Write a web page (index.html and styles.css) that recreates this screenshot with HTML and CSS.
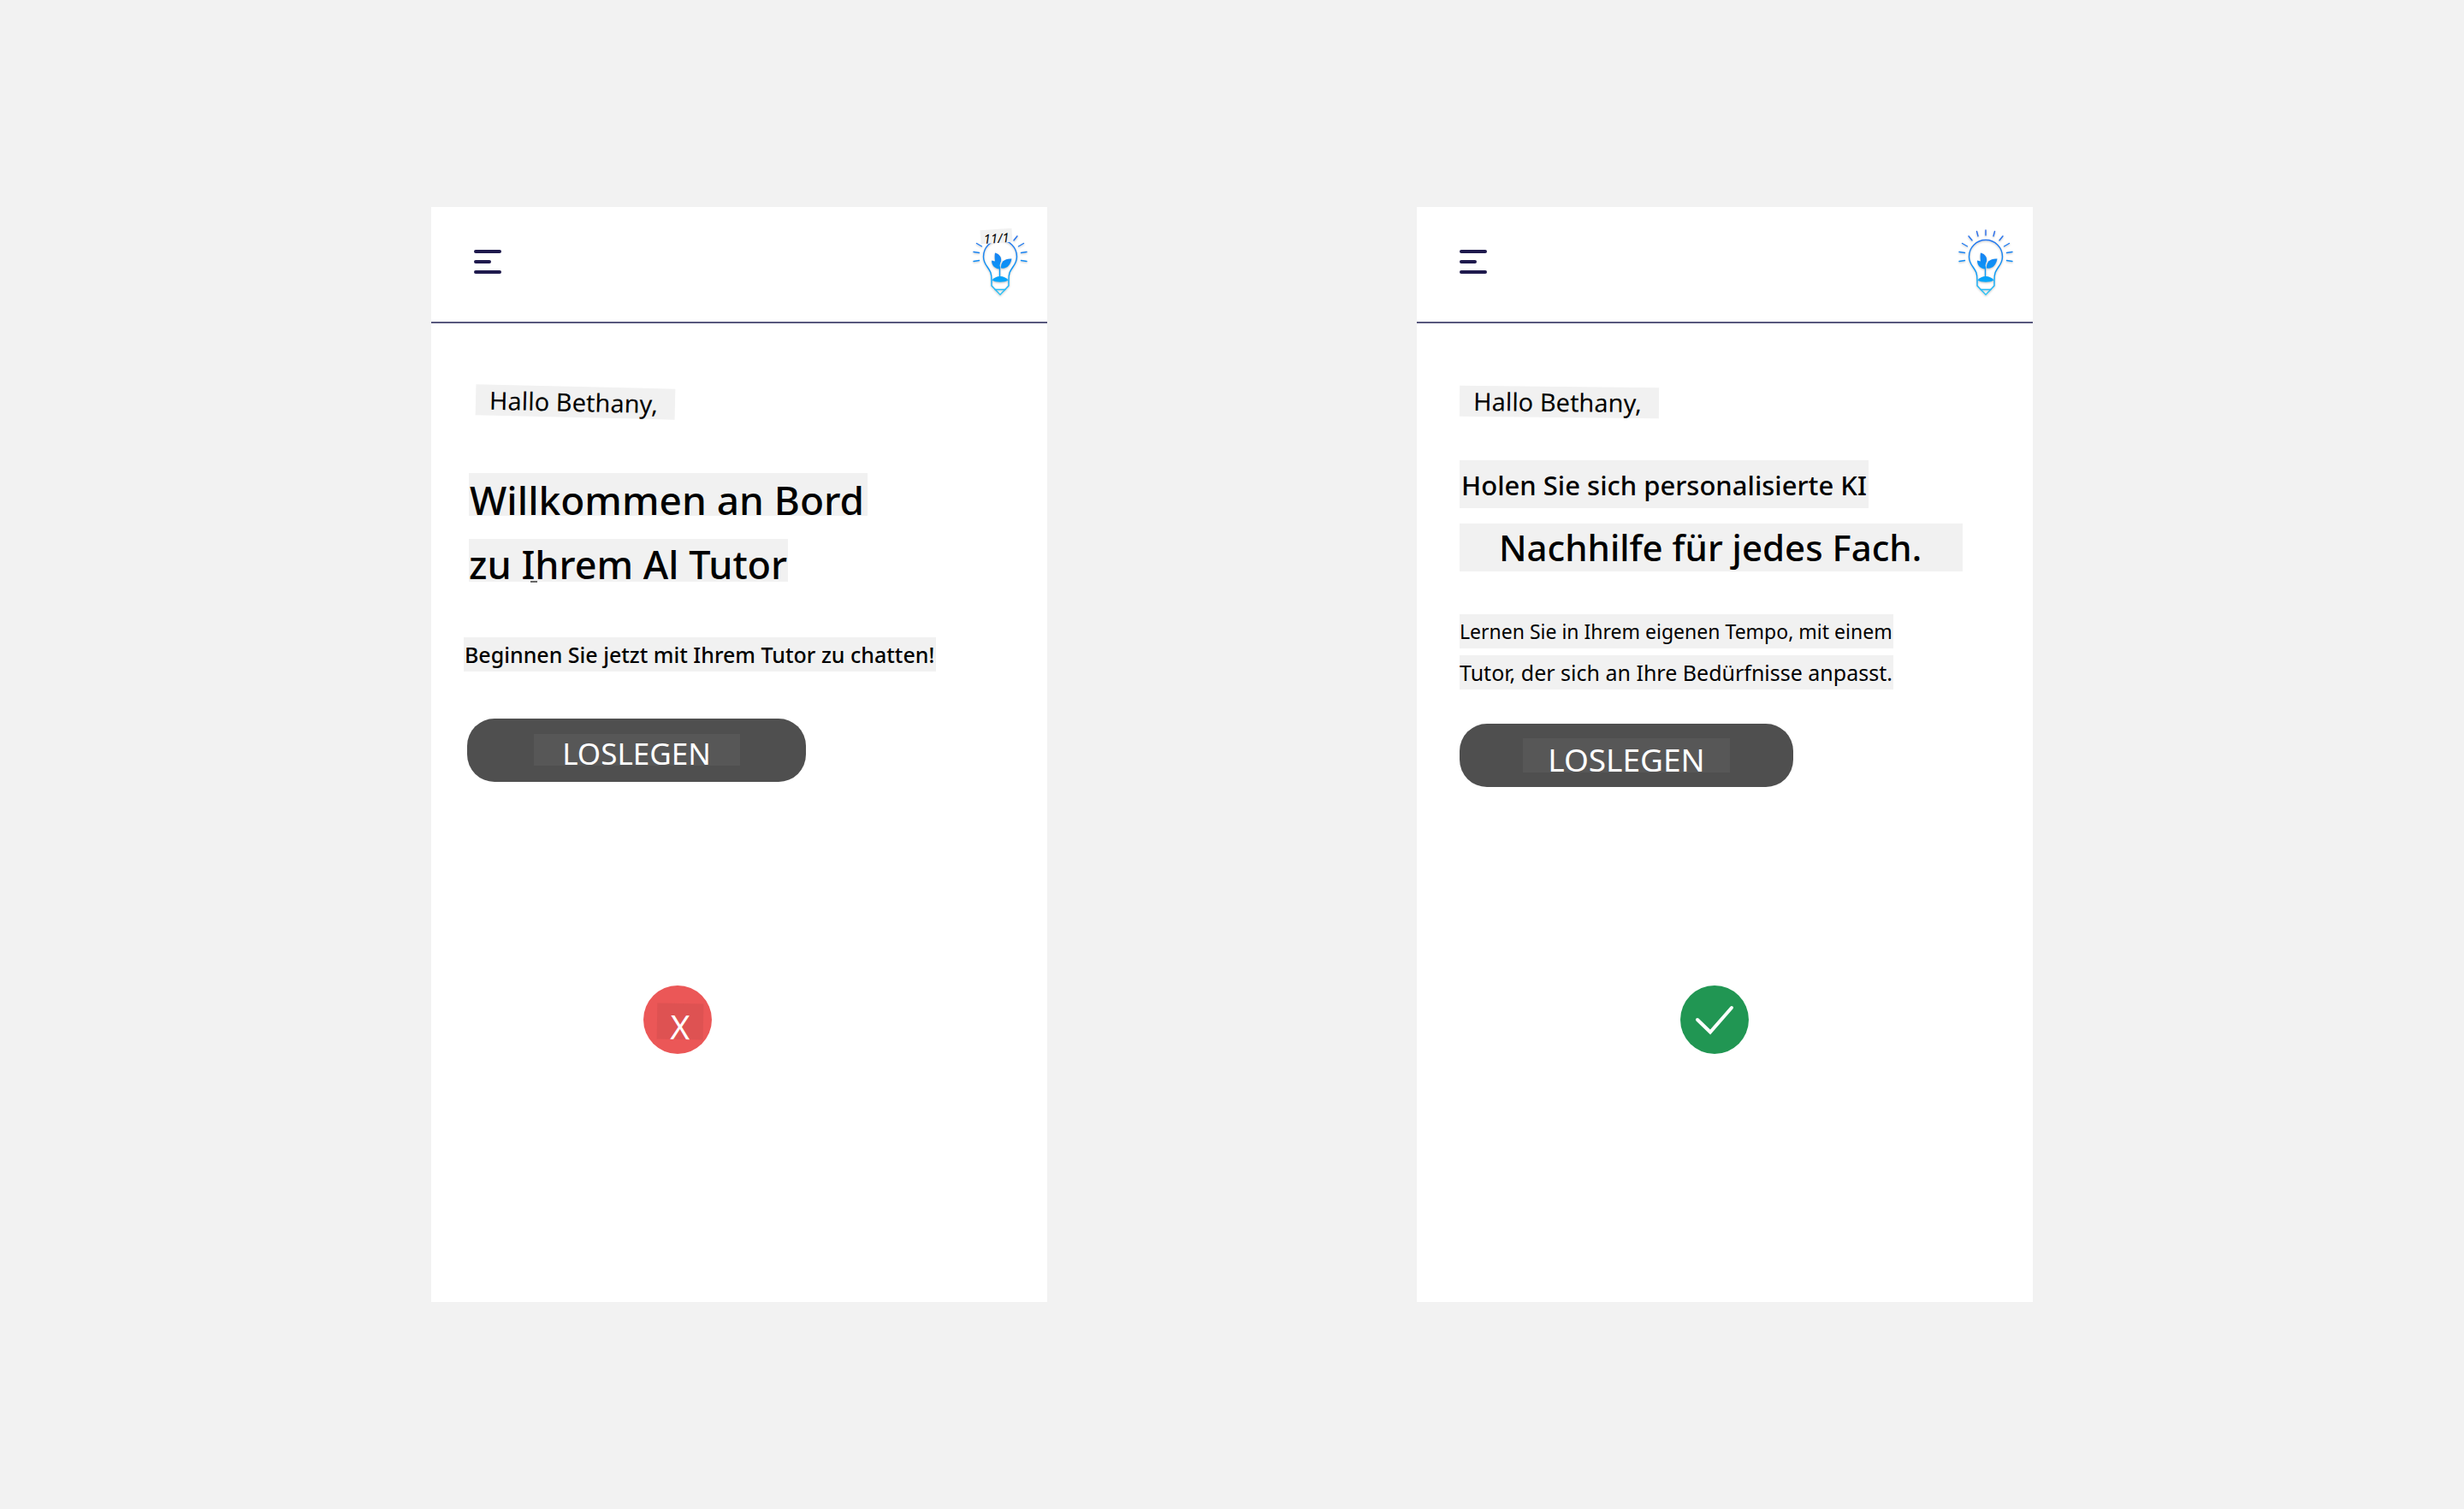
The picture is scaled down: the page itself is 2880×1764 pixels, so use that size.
FILE: index.html
```html
<!DOCTYPE html>
<html lang="de">
<head>
<meta charset="utf-8">
<meta name="viewport" content="width=device-width, initial-scale=1">
<title>KI Tutor</title>
<link rel="stylesheet" href="styles.css">
</head>
<body>
<svg class="defs" aria-hidden="true">
  <defs>
    <linearGradient id="sky" gradientUnits="userSpaceOnUse" x1="0" y1="0" x2="0" y2="78">
      <stop offset="0" stop-color="#2f6bec"/>
      <stop offset="0.5" stop-color="#0f8df5"/>
      <stop offset="0.75" stop-color="#05a4fa"/>
      <stop offset="1" stop-color="#35c9f5"/>
    </linearGradient>
    <symbol id="bulb" viewBox="0 0 64 80">
      <g fill="none" stroke="url(#sky)" stroke-width="1.4" stroke-linecap="round" stroke-linejoin="round">
        <path d="M31.99 1L32 7M21.500 2.500L23 8M42.500 2.500L41 8M12 8L16 13M52 8L48 13M4.500 16.500L10.500 20M59.500 16.500L53.500 20M1 26.500L7.500 27.500M63 26.500L56.500 27.500M1 37.500L7.500 36.500M63 37.500L56.500 36.500"/>
        <path d="M22 60C22 51 20.500 49 17 44C14 40 12.500 36 12.500 32A19.500 19.500 0 0 1 51.500 32C51.500 36 50 40 47 44C43.500 49 42 51 42 60V66L32 76.500L22 66Z"/>
        <path d="M31.500 44V56M26 70.500H38"/>
      </g>
      <g fill="url(#sky)">
        <path d="M26 27.500C31.500 29 34 33 33 37.500C31.500 40 31.500 43 31.500 46.500C25.500 46 22 42 22 36.500L26 37.500C25.500 34 25.500 30 26 27.500Z"/>
        <path d="M45.500 34.500C37 34 32.500 38 33 45.500C40 46.500 44 42 45.500 34.500Z"/>
        <path d="M22.500 59.500C27 53.500 37 53.500 41.500 59.500C37 62.500 27 62.500 22.500 59.500Z"/>
      </g>
    </symbol>
  </defs>
</svg>
<main class="board">
  <section class="screen">
    <header class="topbar">
      <button class="menu" type="button" aria-label="Menü"><span class="bar"></span><span class="bar bar-short"></span><span class="bar"></span></button>
      <div class="logo">
        <svg class="bulb" aria-hidden="true"><use href="#bulb"/></svg>
        <span class="tag">11/1</span>
      </div>
    </header>
    <div class="content welcome">
      <p class="strip greeting greeting-tilted">Hallo Bethany,</p>
      <h1 class="title">
        <span class="strip title-line">Willkommen an Bord</span>
        <span class="strip title-line title-line-marked">zu Ihrem Al Tutor</span>
      </h1>
      <p class="strip note">Beginnen Sie jetzt mit Ihrem Tutor zu chatten!</p>
      <button class="cta" type="button"><span class="cta-label">LOSLEGEN</span></button>
      <div class="badge badge-bad"><span class="cross">X</span></div>
    </div>
  </section>
  <section class="screen">
    <header class="topbar">
      <button class="menu" type="button" aria-label="Menü"><span class="bar"></span><span class="bar bar-short"></span><span class="bar"></span></button>
      <div class="logo">
        <svg class="bulb" aria-hidden="true"><use href="#bulb"/></svg>
      </div>
    </header>
    <div class="content offer">
      <p class="strip greeting">Hallo Bethany,</p>
      <h1 class="title">
        <span class="strip lead-line">Holen Sie sich personalisierte KI</span>
        <span class="strip main-line">Nachhilfe für jedes Fach.</span>
      </h1>
      <p class="details">
        <span class="strip detail-line">Lernen Sie in Ihrem eigenen Tempo, mit einem</span>
        <span class="strip detail-line detail-line-wide">Tutor, der sich an Ihre Bedürfnisse anpasst.</span>
      </p>
      <button class="cta" type="button"><span class="cta-label">LOSLEGEN</span></button>
      <div class="badge badge-good">
        <svg class="check" viewBox="0 0 80 80" aria-hidden="true"><path d="M20 40L35 54.500L60 26"/></svg>
      </div>
    </div>
  </section>
</main>
</body>
</html>
```
FILE: styles.css
```css
* { box-sizing: border-box; }

body {
  margin: 0;
  background: #f2f2f2;
  color: #000;
  font-family: "Noto Sans", sans-serif;
}

.defs { position: absolute; width: 0; height: 0; }

.board {
  display: grid;
  grid-template-columns: repeat(2, minmax(0, 720px));
  justify-content: center;
  align-content: center;
  column-gap: 15%;
  min-height: 100vh;
}

.screen { background: #fff; }

.topbar {
  display: flex;
  justify-content: space-between;
  align-items: flex-start;
  padding: 26px 23px 28px 50px;
  border-bottom: 2px solid #58587d;
}

.menu {
  display: flex;
  flex-direction: column;
  gap: 8px;
  margin-top: 24px;
  padding: 0;
  border: 0;
  background: none;
}

.bar { width: 32px; height: 4px; border-radius: 2px; background: #1f1a4d; }
.bar-short { width: 20px; }

.logo { position: relative; height: 80px; }
.bulb {
  display: block;
  width: 64px;
  height: 80px;
  filter: drop-shadow(0 1px 1px rgba(0, 0, 0, 0.25));
}

.tag {
  position: absolute;
  top: 0;
  left: 9px;
  width: 37px;
  height: 16px;
  background: #f1f1f1;
  font-size: 15px;
  font-style: italic;
  line-height: 20px;
  text-align: center;
  transform: rotate(-4deg);
}

.content {
  display: flex;
  flex-direction: column;
  align-items: flex-start;
  padding: 73px 24px 290px 42px;
}

.offer { padding-left: 50px; }

.strip {
  display: block;
  width: fit-content;
  background: #f1f1f1;
  white-space: nowrap;
}

.greeting {
  margin: 1px 0 0;
  padding: 0 20px 0 16px;
  font-size: 29px;
  line-height: 36px;
  transform: rotate(0.6deg);
}
.greeting-tilted { margin-left: 10px; transform: rotate(1.3deg); }

.title { display: grid; margin: 0; font-weight: 500; }

.welcome .title { gap: 27px; margin: 65px 0 0 2px; }
.title-line { height: 50px; padding: 0 4px 0 1px; font-size: 46px; line-height: 62px; }
.title-line-marked { position: relative; padding: 0 1px 0 0; font-size: 45px; line-height: 60px; }
.title-line-marked::after {
  content: "";
  position: absolute;
  top: 49px;
  left: 72px;
  width: 8px;
  height: 2px;
  background: #666;
}

.offer .title { gap: 18px; margin-top: 50px; }
.lead-line { height: 56px; padding: 0 2px; font-size: 31px; line-height: 58px; }
.main-line { padding: 0 48px 0 46px; font-size: 42px; line-height: 56px; }

.note {
  margin: 65px 0 0 -4px;
  padding: 0 2px 0 1px;
  font-size: 25px;
  font-weight: 500;
  line-height: 40px;
}

.details { display: grid; gap: 8px; margin: 50px 0 0; }
.detail-line { padding: 0 1px 0 0; font-size: 23px; line-height: 40px; }
.detail-line-wide { font-size: 25px; }

.cta {
  display: flex;
  justify-content: center;
  height: 74px;
  border: 0;
  border-radius: 32px;
  background: #4f4f4f;
  color: #fff;
  font: 400 37px "Noto Sans", sans-serif;
}
.cta-label { background: #575757; }

.welcome .cta { width: 396px; margin-top: 55px; padding: 18px 0; }
.welcome .cta-label { width: 241px; height: 37px; font-size: 35px; line-height: 46px; }
.offer .cta { width: 390px; margin-top: 40px; padding: 17px 0; }
.offer .cta-label { width: 242px; height: 40px; line-height: 50px; }

.badge {
  display: grid;
  place-items: center;
  width: 80px;
  height: 80px;
  border-radius: 50%;
}
.badge-bad { margin: 238px 0 0 206px; padding: 3px 0 0 5px; background: #eb5757; }
.badge-good { margin: 232px 0 0 258px; background: #219653; }

.cross {
  width: 54px;
  height: 42px;
  background: #de5252;
  color: #fff;
  font-size: 39px;
  line-height: 54px;
  text-align: center;
  transform: rotate(1deg);
}

.check {
  width: 80px;
  height: 80px;
  fill: none;
  stroke: #fff;
  stroke-width: 4;
  stroke-linecap: round;
}
```
